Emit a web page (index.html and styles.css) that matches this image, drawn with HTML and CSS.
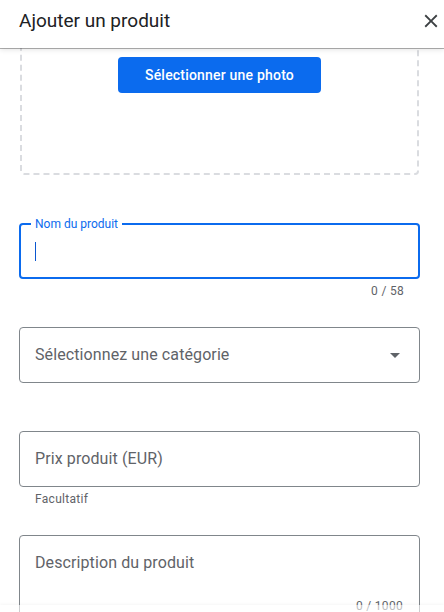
FILE: index.html
```html
<!DOCTYPE html>
<html lang="fr">
<head>
  <meta charset="UTF-8" />
  <title>Ajouter un produit</title>
  <link rel="stylesheet" href="styles.css">
</head>
<body>
  <header class="dialog-header">
    <h1>Ajouter un produit</h1>
    <button class="close-btn" aria-label="Fermer">
      <svg viewBox="0 0 24 24" width="22" height="22">
        <path d="M19 6.41L17.59 5 12 10.59 6.41 5 5 6.41 10.59 12 5 17.59 6.41 19 12 13.41 17.59 19 19 17.59 13.41 12z" fill="#3c4043"/>
      </svg>
    </button>
  </header>

  <main class="dialog-body">
    <div class="photo-drop">
      <button class="btn-primary">Sélectionner une photo</button>
    </div>

    <div class="field field-focused">
      <span class="field-label">Nom du produit</span>
      <span class="caret"></span>
    </div>
    <div class="hint hint-right">0 / 58</div>

    <div class="field field-select">
      <span class="placeholder">Sélectionnez une catégorie</span>
      <span class="arrow"></span>
    </div>

    <div class="field field-price">
      <span class="placeholder">Prix produit (EUR)</span>
    </div>
    <div class="hint">Facultatif</div>

    <div class="field field-area">
      <span class="placeholder">Description du produit</span>
      <span class="counter">0 / 1000</span>
    </div>
  </main>

  <div class="dialog-footer"></div>
</body>
</html>
```

FILE: styles.css
```css
body {
  margin: 0;
  background: #fff;
  font-family: Roboto, "Liberation Sans", sans-serif;
  color: #202124;
  overflow: hidden;
}
.dialog-header {
  position: relative;
  z-index: 2;
  height: 48px;
  box-sizing: border-box;
  padding: 0 2px 7px 19px;
  display: flex;
  align-items: center;
  justify-content: space-between;
  background: #fff;
  box-shadow: 0 1px 0 rgba(0, 0, 0, 0.3), 0 2px 5px rgba(0, 0, 0, 0.1);
}
.dialog-header h1 {
  margin: 0;
  font-size: 19px;
  font-weight: 400;
  line-height: 24px;
  color: #202124;
}
.close-btn {
  border: 0;
  background: none;
  padding: 0;
  width: 22px;
  height: 22px;
  display: flex;
}
.dialog-body {
  padding: 0 24px 0 19px;
}
.photo-drop {
  margin: -7px 1px 0;
  padding: 14px 0 80px;
  border: 2px dashed #dadce0;
  border-radius: 4px;
  display: flex;
  justify-content: center;
}
.btn-primary {
  width: 203px;
  height: 36px;
  border: 0;
  border-radius: 4px;
  background: #0b6bee;
  color: #fff;
  font-family: inherit;
  font-size: 14px;
  font-weight: 500;
  letter-spacing: 0.2px;
}
.field {
  position: relative;
  height: 56px;
  box-sizing: border-box;
  border: 1px solid #80868b;
  border-radius: 4px;
  padding: 0 15px;
  display: flex;
  align-items: center;
  margin-top: 48px;
}
.field-focused {
  border: 2px solid #0b6bee;
  padding: 0 14px;
}
.field-label {
  position: absolute;
  left: 10px;
  top: -9px;
  padding: 0 4px;
  background: #fff;
  color: #0b6bee;
  font-size: 12px;
  line-height: 16px;
}
.caret {
  width: 1px;
  height: 19px;
  background: #0b57d0;
}
.placeholder {
  font-size: 16px;
  line-height: 24px;
  color: #5f6368;
  letter-spacing: 0.1px;
}
.field-select {
  margin-top: 28px;
  justify-content: space-between;
  padding-right: 19px;
}
.arrow {
  width: 0;
  height: 0;
  border-left: 5px solid transparent;
  border-right: 5px solid transparent;
  border-top: 5px solid #5f6368;
}
.hint {
  margin-top: 4px;
  padding: 0 16px;
  font-size: 12px;
  line-height: 16px;
  color: #5f6368;
  letter-spacing: 0.3px;
}
.hint-right {
  text-align: right;
}
.field-area {
  margin-top: 28px;
  height: auto;
  flex-direction: column;
  align-items: stretch;
  padding: 15px 16px 8px 15px;
}
.counter {
  margin-top: 23px;
  text-align: right;
  font-size: 12px;
  line-height: 16px;
  color: #5f6368;
  letter-spacing: 0.3px;
}
.dialog-footer {
  position: fixed;
  left: 0;
  right: 0;
  bottom: -4px;
  height: 11px;
  background: rgba(255, 255, 255, 0.6);
  box-shadow: 0 -1px 3px rgba(0, 0, 0, 0.04);
}
```
